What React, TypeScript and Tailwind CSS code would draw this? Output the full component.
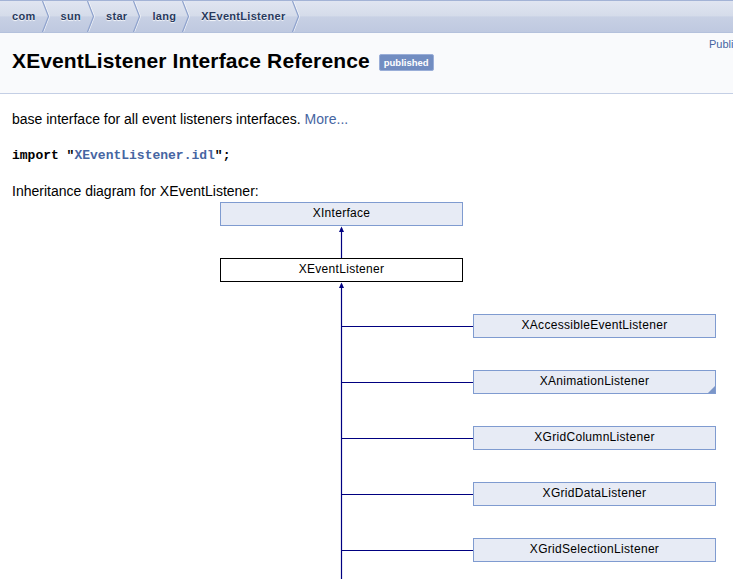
const crumbs = ["com", "sun", "star", "lang", "XEventListener"];

const children = [
  { name: "XAccessibleEventListener" },
  { name: "XAnimationListener", more: true },
  { name: "XGridColumnListener" },
  { name: "XGridDataListener" },
  { name: "XGridSelectionListener" },
];

function Chevron() {
  return (
    <svg width="9" height="31" viewBox="0 0 9 31" className="shrink-0">
      <polyline points="1.5,0 7.5,15.5 1.5,31" fill="none" stroke="#ffffff" strokeOpacity="0.7" strokeWidth="1" transform="translate(1,0)" />
      <polyline points="1.5,0 7.5,15.5 1.5,31" fill="none" stroke="#8ea2cd" strokeWidth="1.2" />
    </svg>
  );
}

function Node({ label, top, left, base, more }: { label: string; top: number; left: number; base?: boolean; more?: boolean }) {
  return (
    <div
      className={
        "absolute w-[243px] h-[24px] flex items-center justify-center pb-[2px] border text-[12px] tracking-[0.3px] text-black " +
        (base ? "bg-white border-black" : "bg-[#e7ebf5] border-[#7f9bd0]")
      }
      style={{ top, left }}
    >
      {label}
      {more && (
        <svg width="7" height="7" className="absolute right-0 bottom-0">
          <polygon points="7,0 7,7 0,7" fill="#7b96c8" />
        </svg>
      )}
    </div>
  );
}

export default function App() {
  return (
    <div className="w-[733px] h-[579px] overflow-hidden bg-white text-black font-['Liberation_Sans',Arial,sans-serif]">
      {/* Breadcrumb */}
      <div className="h-[33px] flex items-center pl-[1px] border-t border-b border-t-[#a3b3d6] border-b-[#b4c1dc] bg-[linear-gradient(to_bottom,#e0e5f1_0%,#d5dcea_47%,#c7d0e4_52%,#bfc9e0_100%)]">
        {crumbs.map((c) => (
          <div key={c} className="flex items-center h-full">
            <span className="ml-[11px] mr-[5px] text-[11px] font-bold tracking-[0.3px] text-[#283a5d] [text-shadow:0_1px_1px_rgba(255,255,255,0.9)]">
              {c}
            </span>
            <Chevron />
          </div>
        ))}
      </div>

      {/* Header */}
      <div className="h-[61px] flex bg-[#f9fafc] border-b border-[#c4cfe5]">
        <div className="flex-1 pl-[12px] pt-[15px]">
          <div className="leading-[26px] whitespace-nowrap">
            <span className="text-[21px] font-bold tracking-[0.12px]">XEventListener Interface Reference</span>
            <span className="inline-block align-middle relative top-[-1px] ml-[9px] h-[17px] px-[4px] rounded-[2px] border border-[#9aaed8] bg-[#728dc1] text-white text-[9.5px] font-bold leading-[15px]">
              published
            </span>
          </div>
        </div>
        <div className="w-[24px] shrink-0 overflow-hidden whitespace-nowrap pt-[4px] text-[11px] leading-[14px] text-[#4665a2]">
          Public Member Functions
        </div>
      </div>

      {/* Body */}
      <div className="pl-[12px] text-[14px] leading-[18px]">
        <p className="pt-[16px]">
          base interface for all event listeners interfaces. <span className="text-[#4665a2]">More...</span>
        </p>
        <p className="mt-[19px] font-['Liberation_Mono','Courier_New',monospace] text-[13px] font-bold">
          import "<span className="text-[#4665a2]">XEventListener.idl</span>";
        </p>
        <p className="mt-[17px]">Inheritance diagram for XEventListener:</p>
      </div>

      {/* Diagram */}
      <div className="relative mt-[2px] h-[377px]">
        <svg width="733" height="377" className="absolute left-0 top-0">
          <line x1="341.5" y1="26" x2="341.5" y2="56" stroke="#000080" strokeWidth="1.2" />
          <polygon points="341.5,24.5 339,30 344,30" fill="#000080" />
          <line x1="341.5" y1="82" x2="341.5" y2="377" stroke="#000080" strokeWidth="1.2" />
          <polygon points="341.5,80.5 339,86 344,86" fill="#000080" />
          {children.map((_, i) => (
            <line key={i} x1="341.5" y1={124.5 + i * 56} x2="473" y2={124.5 + i * 56} stroke="#000080" strokeWidth="1.2" />
          ))}
        </svg>
        <Node label="XInterface" top={0} left={220} />
        <Node label="XEventListener" top={56} left={220} base />
        {children.map((c, i) => (
          <Node key={c.name} label={c.name} top={112 + i * 56} left={473} more={c.more} />
        ))}
      </div>
    </div>
  );
}
